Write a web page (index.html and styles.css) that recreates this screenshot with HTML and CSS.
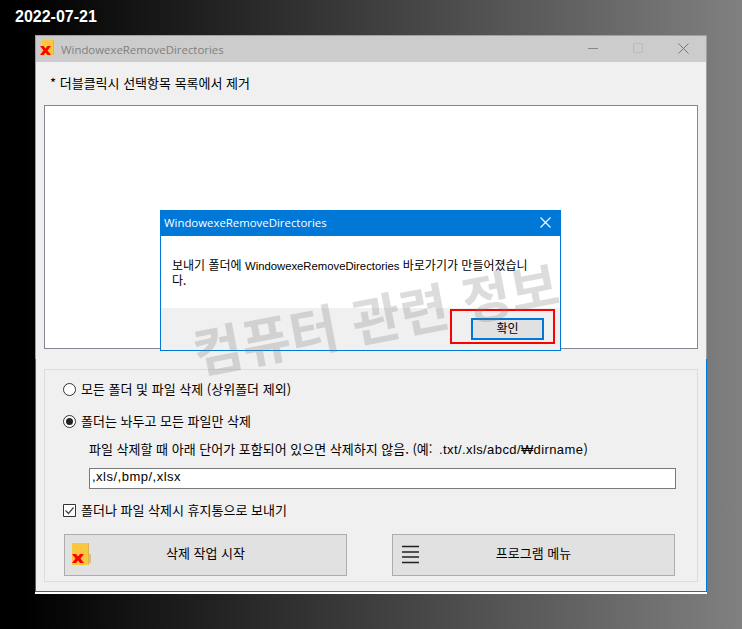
FILE: index.html
```html
<!DOCTYPE html>
<html lang="ko">
<head>
<meta charset="utf-8">
<title>WindowexeRemoveDirectories</title>
<link rel="stylesheet" href="styles.css">
</head>
<body>
<div class="date">2022-07-21</div>
<div class="window">
  <div class="upper">
    <div class="titlebar">
      <svg class="app-icon" width="15" height="16" viewBox="0 0 15 16">
        <path d="M2 0h11v15H2z" fill="#fcc73f"/>
        <path d="M13 0h1v15h-1z" fill="#d9b25a"/>
        <path d="M0 6h3.500l2 2.500 2-2.500H11L7.500 10.500 11 15H7.500l-2-2.500-2 2.500H0l3.500-4.500z" fill="#f00"/>
      </svg>
      <span class="win-title">WindowexeRemoveDirectories</span>
      <div class="win-controls">
        <svg width="10" height="10" viewBox="0 0 10 10"><path d="M0 5.500h10" stroke="#888" fill="none"/></svg>
        <svg width="10" height="10" viewBox="0 0 10 10"><path d="M.5.500h9v9h-9z" stroke="#bbb" fill="none"/></svg>
        <svg width="11" height="11" viewBox="0 0 11 11"><path d="M.5.500l10 10M10.500.500l-10 10" stroke="#777" fill="none"/></svg>
      </div>
    </div>
    <div class="upper-body">
      <div class="list-label">* 더블클릭시 선택항목 목록에서 제거</div>
      <div class="listbox"></div>
    </div>
  </div>
  <div class="lower">
    <div class="group">
      <div class="opt">
        <svg class="glyph" width="13" height="13" viewBox="0 0 13 13"><circle cx="6.500" cy="6.500" r="6" fill="#fff" stroke="#333"/></svg>
        <span class="opt-text">모든 폴더 및 파일 삭제 (상위폴더 제외)</span>
      </div>
      <div class="opt opt-2">
        <svg class="glyph" width="13" height="13" viewBox="0 0 13 13"><circle cx="6.500" cy="6.500" r="6" fill="#fff" stroke="#333"/><circle cx="6.500" cy="6.500" r="3.500" fill="#222"/></svg>
        <span class="opt-text">폴더는 놔두고 모든 파일만 삭제</span>
      </div>
      <div class="note">파일 삭제할 때 아래 단어가 포함되어 있으면 삭제하지 않음. (예: <span class="note-latin">.txt/.xls/abcd/₩dirname</span>)</div>
      <div class="text-input">,xls/,bmp/,xlsx</div>
      <div class="opt opt-check">
        <svg class="glyph" width="13" height="13" viewBox="0 0 13 13"><path d="M.5.500h12v12H.5z" fill="#fff" stroke="#333"/><path d="M2.500 6.500l3 3 5-6" fill="none" stroke="#444" stroke-width="1.300"/></svg>
        <span class="opt-text">폴더나 파일 삭제시 휴지통으로 보내기</span>
      </div>
      <div class="actions">
        <div class="action">
          <svg class="action-icon" width="19" height="22" viewBox="0 0 19 22">
            <path d="M0 0h17v22H0z" fill="#fcc73f"/>
            <path d="M16 0h1v22h-1z" fill="#d9b25a"/>
            <path d="M17 11h2v9h-2z" fill="#d9c080"/>
            <path d="M0 11h4l2 2.500 2-2.500h4L8.500 15.500 12 20H8l-2-2.500L4 20H0l3.500-4.500z" fill="#f00"/>
          </svg>
          <span class="action-label">삭제 작업 시작</span>
        </div>
        <div class="action">
          <svg class="action-icon menu-icon" width="17" height="19" viewBox="0 0 17 19"><path d="M0 1.500h17M0 7h17M0 12h17M0 17.500h17" stroke="#222" stroke-width="1.500" fill="none"/></svg>
          <span class="action-label">프로그램 메뉴</span>
        </div>
      </div>
    </div>
  </div>
  <div class="dialog">
    <div class="dialog-title">
      <span>WindowexeRemoveDirectories</span>
      <svg width="11" height="11" viewBox="0 0 11 11"><path d="M.5.500l10 10M10.500.500l-10 10" stroke="#fff" fill="none" stroke-width="1.100"/></svg>
    </div>
    <div class="dialog-body">보내기 폴더에 <span class="dialog-latin">WindowexeRemoveDirectories</span> 바로가기가 만들어졌습니다.</div>
    <div class="dialog-footer">
      <div class="ok">확인</div>
      <div class="highlight"></div>
    </div>
  </div>
  <div class="watermark">컴퓨터 관련 정보</div>
</div>
</body>
</html>
```

FILE: styles.css
```css
* { box-sizing: border-box; }
html, body { margin: 0; height: 100%; }
body {
  background: linear-gradient(to right, #000 3%, #808080 100%);
  font-family: "Noto Sans CJK KR", "Liberation Sans", sans-serif;
  font-size: 13px;
  color: #000;
  overflow: hidden;
}
.date {
  height: 35px;
  padding: 8px 0 0 15px;
  font-family: "Liberation Sans", sans-serif;
  font-size: 16px;
  font-weight: 700;
  line-height: 18px;
  color: #fff;
  text-shadow: 0 0 2px #000;
}
.window {
  position: relative;
  width: 672px;
  margin-left: 35px;
  background: #f0f0f0;
  border-bottom: 2px solid #fff;
}
.upper {
  border: 1px solid #a0a0a0;
  border-bottom: 0;
}
.titlebar {
  display: flex;
  align-items: center;
  height: 26px;
  background: #ccc;
  padding-left: 4px;
}
.app-icon {
  flex: none;
  margin-bottom: 3px;
}
.win-title {
  margin-left: 6px;
  font-family: "Open Sans", sans-serif;
  font-size: 11.400px;
  color: #808080;
}
.win-controls {
  margin-left: auto;
  display: flex;
  align-items: center;
  gap: 35px;
  padding: 0 17px 2px 0;
}
.upper-body { padding: 0 8px 10px; }
.list-label {
  height: 43px;
  padding: 12px 0 0 6px;
  line-height: 18px;
}
.listbox {
  height: 244px;
  background: #fff;
  border: 1px solid #828790;
}
.lower {
  border: 1px solid #0078d7;
  border-top: 0;
  padding: 10px 8px 9px;
}
.group {
  height: 213px;
  border: 1px solid #dcdcdc;
  padding: 9px 18px 0;
}
.opt {
  display: flex;
  align-items: center;
  gap: 5px;
  height: 20px;
}
.opt-text { margin-bottom: 2px; }
.glyph { flex: none; }
.opt-2 { margin-top: 12px; }
.note {
  margin: 8px 0 0 26px;
  height: 20px;
  line-height: 19px;
  white-space: nowrap;
}
.note-latin {
  margin-left: 3px;
  font-family: "Liberation Sans", sans-serif;
  letter-spacing: .4px;
}
.text-input {
  margin: 9px 0 0 26px;
  width: 587px;
  height: 21px;
  line-height: 16px;
  background: #fff;
  border: 1px solid #7a7a7a;
  padding-left: 2px;
  font-family: "Liberation Sans", sans-serif;
  font-size: 13px;
  letter-spacing: .5px;
}
.opt-check { margin-top: 11px; }
.actions {
  display: flex;
  gap: 45px;
  margin: 14px 0 0 1px;
}
.action {
  position: relative;
  display: flex;
  align-items: center;
  justify-content: center;
  width: 283px;
  height: 42px;
  background: #e1e1e1;
  border: 1px solid #adadad;
}
.action-label { margin-bottom: 5px; }
.action-icon {
  position: absolute;
  left: 7px;
  top: 8px;
}
.menu-icon { left: 9px; top: 10px; }
.dialog {
  position: absolute;
  left: 125px;
  top: 175px;
  width: 401px;
  height: 141px;
  display: flex;
  flex-direction: column;
  background: #fff;
  border: 1px solid #0078d7;
}
.dialog-title {
  display: flex;
  align-items: center;
  justify-content: space-between;
  height: 25px;
  flex: none;
  padding: 0 9px 2px 3px;
  background: #0078d7;
  color: #fff;
  font-family: "Open Sans", sans-serif;
  font-size: 11.400px;
}
.dialog-body {
  height: 72px;
  flex: none;
  padding: 22px 25px 0 11px;
  font-size: 12px;
  line-height: 13px;
}
.dialog-latin {
  font-family: "Liberation Sans", sans-serif;
  font-size: 11.300px;
}
.dialog-footer {
  position: relative;
  flex: 1;
  background: #f0f0f0;
  display: flex;
  justify-content: flex-end;
  padding: 10px 16px 0 0;
}
.ok {
  width: 73px;
  height: 22px;
  line-height: 15px;
  font-size: 12px;
  text-align: center;
  background: #e1e1e1;
  border: 2px solid #0078d7;
}
.highlight {
  position: absolute;
  left: 289px;
  top: 1px;
  width: 105px;
  height: 35px;
  border: 2px solid #f00;
}
.watermark {
  position: absolute;
  left: 155px;
  top: 251px;
  font-size: 53px;
  font-weight: 700;
  line-height: 60px;
  white-space: nowrap;
  color: rgba(120, 120, 120, 0.26);
  transform: rotate(-11deg);
  pointer-events: none;
}
```
